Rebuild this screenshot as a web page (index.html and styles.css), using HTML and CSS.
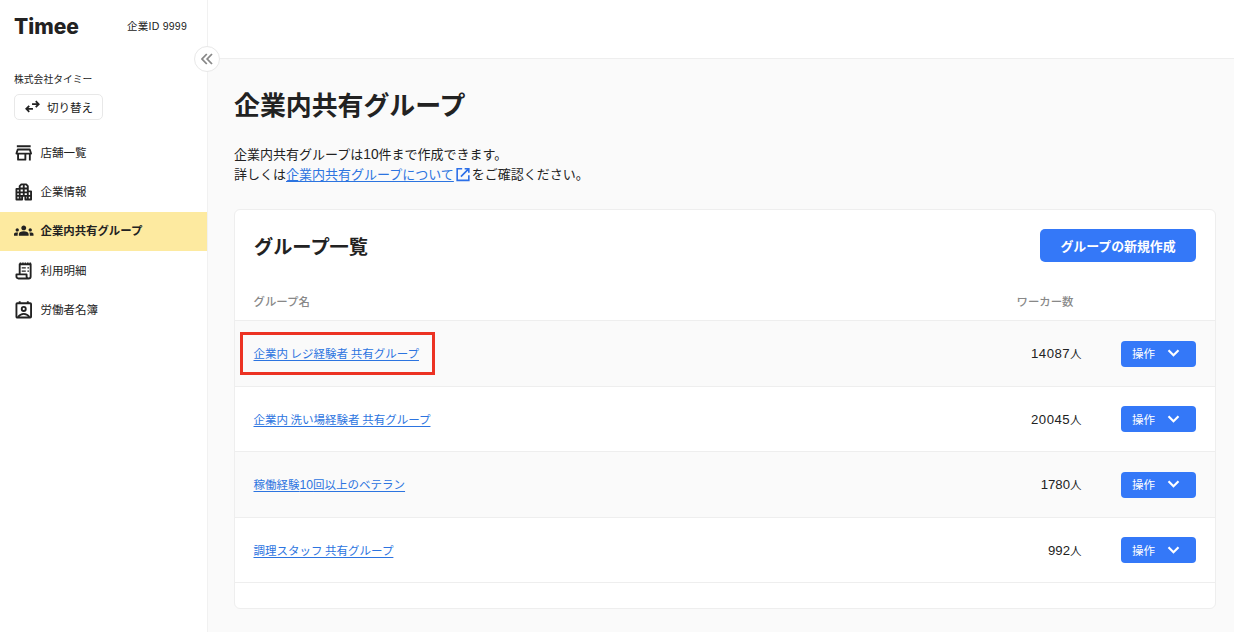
FILE: index.html
```html
<!DOCTYPE html>
<html lang="ja">
<head>
    <meta charset="UTF-8">
    <title>企業内共有グループ</title>
    <link rel="stylesheet" href="styles.css">
</head>
<body>
    <div class="sidebar">
        <div class="brand">
            <div class="logo">Timee</div>
            <div class="company-id">企業ID 9999</div>
        </div>
        <div class="company-name">株式会社タイミー</div>
        <button class="switch">
            <svg class="switch-icon" viewBox="0 0 16 14" fill="none" stroke="#222" stroke-width="1.9">
                <path d="M7.5 4.5h7M11.5 1.3l3.2 3.2-3.2 3.2M8.5 9.5h-7M4.5 6.3L1.3 9.5l3.2 3.2"/>
            </svg>
            <span>切り替え</span>
        </button>

        <div class="menu">
            <a class="menu-item">
                <svg class="icon line" viewBox="0 0 24 24"><path d="M3.5 4h17M3 13l1.600-5h14.800L21 13zM5 13v7.500h9V13M19.500 13v8.500"/></svg>
                <span>店舗一覧</span>
            </a>
            <a class="menu-item">
                <svg class="icon line" viewBox="0 0 24 24"><path d="M10 21.500H3V8.500h4V5l2-2h6l2 2v6.500h4v10h-7V17h-4zM3 12.700h14M3 17h18M7 8.500v13M12 3v14M17 11.500v10M7 8h10"/></svg>
                <span>企業情報</span>
            </a>
            <a class="menu-item active">
                <svg class="icon" viewBox="0 0 24 24"><path d="M12 12.750c1.630 0 3.070.390 4.240.900 1.080.480 1.760 1.560 1.760 2.730V18H6v-1.610c0-1.180.680-2.260 1.760-2.730 1.170-.520 2.610-.910 4.240-.910zM4 13c1.100 0 2-.900 2-2s-.900-2-2-2-2 .900-2 2 .900 2 2 2zm1.130 1.100c-.370-.060-.740-.100-1.130-.100-.990 0-1.930.210-2.780.580C.480 14.900 0 15.620 0 16.430V18h4.500v-1.610c0-.830.230-1.610.630-2.290zM20 13c1.100 0 2-.900 2-2s-.900-2-2-2-2 .900-2 2 .900 2 2 2zm4 3.430c0-.810-.480-1.530-1.220-1.850-.850-.370-1.790-.580-2.780-.580-.390 0-.760.040-1.130.100.400.680.630 1.460.630 2.290V18H24zM12 5.500c1.660 0 3 1.340 3 3s-1.340 3-3 3-3-1.340-3-3 1.340-3 3-3z"/></svg>
                <span>企業内共有グループ</span>
            </a>
            <a class="menu-item">
                <svg class="icon line" viewBox="0 0 24 24"><path d="M7 16V4h13.500v15c0 1.500-1 2.500-2.500 2.500H5.500c-1.500 0-2.500-1-2.500-2.500v-2.500h12.500V19c0 1.500 1 2.500 2.500 2.500"/><path class="dashes" d="M7 3h14"/><path class="thin" d="M9.500 8.500h5M16.500 8.500h2M9.500 12.500h5M16.500 12.500h2"/></svg>
                <span>利用明細</span>
            </a>
            <a class="menu-item">
                <svg class="icon line" viewBox="0 0 24 24"><rect x="3" y="4" width="18" height="17.500" rx="1"/><path d="M7 1.500V4M17 1.500V4M5 21c2-3 4.500-4 7-4s5 1 7 4"/><circle cx="12" cy="11" r="2.500"/></svg>
                <span>労働者名簿</span>
            </a>
        </div>

        <button class="collapse">
            <svg class="collapse-icon" viewBox="0 0 12 12" fill="none" stroke="#888" stroke-width="1.8"><path d="M5.800 1L1 6l4.800 5M11 1L6.200 6l4.800 5"/></svg>
        </button>
    </div>

    <div class="main">
        <div class="topbar"></div>
        <div class="content">
            <h1>企業内共有グループ</h1>
            <p class="description">
                企業内共有グループは<span class="digits">10</span>件まで作成できます。<br>
                詳しくは<a class="help-link">企業内共有グループについて</a><svg class="external" viewBox="0 0 18 18" fill="none" stroke="#2c6fe8" stroke-width="1.9"><path d="M8 2H2v14h14v-6M11 2h5v5M16 2L6.500 11.500"/></svg>をご確認ください。
            </p>

            <div class="card">
                <div class="card-header">
                    <h2>グループ一覧</h2>
                    <button class="create">グループの新規作成</button>
                </div>
                <div class="row head">
                    <div>グループ名</div>
                    <div>ワーカー数</div>
                </div>
                <div class="row">
                    <a class="group-link marked">企業内 レジ経験者 共有グループ</a>
                    <div class="count strong">14087<span class="unit">人</span></div>
                    <button class="action">操作<svg class="chevron" viewBox="0 0 12 8"><path d="M1 1.300l5 4.900 5-4.900"/></svg></button>
                </div>
                <div class="row">
                    <a class="group-link">企業内 洗い場経験者 共有グループ</a>
                    <div class="count strong">20045<span class="unit">人</span></div>
                    <button class="action">操作<svg class="chevron" viewBox="0 0 12 8"><path d="M1 1.300l5 4.900 5-4.900"/></svg></button>
                </div>
                <div class="row">
                    <a class="group-link">稼働経験<span class="digits">10</span>回以上のベテラン</a>
                    <div class="count">1780<span class="unit">人</span></div>
                    <button class="action">操作<svg class="chevron" viewBox="0 0 12 8"><path d="M1 1.300l5 4.900 5-4.900"/></svg></button>
                </div>
                <div class="row">
                    <a class="group-link">調理スタッフ 共有グループ</a>
                    <div class="count">992<span class="unit">人</span></div>
                    <button class="action">操作<svg class="chevron" viewBox="0 0 12 8"><path d="M1 1.300l5 4.900 5-4.900"/></svg></button>
                </div>
            </div>
        </div>
    </div>
</body>
</html>
```

FILE: styles.css
```css
* {
    box-sizing: border-box;
}
body {
    margin: 0;
    display: flex;
    height: 632px;
    overflow: hidden;
    background: #fafafa;
    color: #222;
    font-family: "Noto Sans CJK JP", sans-serif;
    font-size: 11.5px;
}
button {
    font-family: inherit;
    cursor: pointer;
}

.sidebar {
    position: relative;
    width: 208px;
    flex-shrink: 0;
    background: #fff;
    border-right: 1px solid #f1f1f1;
}
.brand {
    display: flex;
    align-items: center;
    justify-content: space-between;
    height: 52px;
    padding: 0 20px 0 14px;
}
.logo {
    font-family: Inter, sans-serif;
    font-size: 21px;
    font-weight: 800;
}
.company-id {
    padding-bottom: 1px;
    font-size: 10.5px;
    font-family: "Liberation Sans", "Noto Sans CJK JP", sans-serif;
    letter-spacing: 0.25px;
}
.company-name {
    margin: 19px 0 7px 14px;
    font-size: 9.8px;
    line-height: 16px;
}
.switch {
    display: flex;
    align-items: center;
    gap: 7px;
    width: 89px;
    height: 26px;
    margin-left: 14px;
    padding: 0 0 1px 10px;
    background: #fff;
    border: 1.5px solid #e8e8e8;
    border-radius: 5px;
    color: #222;
    font-size: 11.5px;
}
.switch-icon {
    width: 15px;
    height: 13px;
}

.menu {
    margin-top: 13px;
}
.menu-item {
    display: flex;
    align-items: center;
    gap: 7px;
    height: 39.3px;
    padding-left: 14px;
}
.menu-item span {
    padding-bottom: 2px;
}
.menu-item.active {
    background: #fdeaa0;
    font-weight: 700;
}
.menu-item.active span {
    font-size: 11.4px;
}
.icon {
    width: 19.5px;
    height: 19.5px;
    fill: #222;
}
.icon.line {
    fill: none;
    stroke: #222;
    stroke-width: 2.3;
    stroke-linejoin: round;
}
.icon .dashes {
    stroke-dasharray: 2 1;
}
.icon .thin {
    stroke-width: 1.7;
}

.collapse {
    position: absolute;
    top: 46px;
    right: -13px;
    display: flex;
    align-items: center;
    justify-content: center;
    width: 26px;
    height: 26px;
    padding: 0;
    background: #fff;
    border: 1px solid #e8e8e8;
    border-radius: 50%;
}
.collapse-icon {
    width: 12px;
    height: 12px;
}

.main {
    flex: 1;
}
.topbar {
    height: 59px;
    background: #fff;
    border-bottom: 1px solid #eee;
}
.content {
    padding: 25px 18px 0 26px;
}
h1 {
    margin: 0;
    font-size: 25.9px;
    line-height: 40px;
}
.description {
    height: 40px;
    margin: 20px 0 25px;
    font-size: 13px;
    line-height: 19px;
}
.digits {
    font-family: "Liberation Sans", sans-serif;
    font-size: 1.06em;
}
.help-link, .group-link {
    color: #2c74e0;
    text-decoration: underline;
    text-decoration-thickness: 1px;
    text-underline-offset: 1.5px;
}
.external {
    width: 18px;
    height: 15px;
    vertical-align: -3px;
}

.card {
    height: 400px;
    background: #fff;
    border: 1px solid #eee;
    border-radius: 6px;
}
.card-header {
    display: flex;
    align-items: center;
    justify-content: space-between;
    height: 71px;
    padding: 0 19px;
}
h2 {
    margin: 0;
    font-size: 19.2px;
}
.create {
    width: 156px;
    height: 33px;
    padding: 0 0 1px;
    background: #3478f8;
    border: none;
    border-radius: 5px;
    color: #fff;
    font-size: 12.9px;
    font-weight: 700;
}

.row {
    display: grid;
    grid-template-columns: 763px 65px 1fr;
    align-items: center;
    height: 65.5px;
    padding: 0 19px 0 18.5px;
    border-bottom: 1px solid #eee;
}
.row:nth-child(odd) {
    background: #fafafa;
}
.row.head {
    height: 40px;
    background: #fff;
    color: #888;
    font-size: 11.4px;
    font-weight: 500;
}
.group-link {
    justify-self: start;
}
/* red frame around the group being pointed out */
.marked {
    position: relative;
}
.marked::after {
    content: "";
    position: absolute;
    inset: -13px -16px -14px -13.5px;
    border: 3px solid #ec3223;
}
.count {
    font-family: "Liberation Sans", sans-serif;
    font-size: 13.2px;
    text-align: right;
}
.count.strong {
    letter-spacing: 0.45px;
}
.unit {
    font-family: "Noto Sans CJK JP", sans-serif;
    font-size: 11.5px;
    letter-spacing: 0;
}
.action {
    display: flex;
    align-items: center;
    justify-self: end;
    gap: 12px;
    width: 75px;
    height: 26px;
    margin-top: 1px;
    padding: 0 0 1px 11px;
    background: #3478f8;
    border: none;
    border-radius: 4px;
    color: #fff;
    font-size: 11.5px;
}
.chevron {
    width: 13px;
    height: 8px;
    fill: none;
    stroke: #fff;
    stroke-width: 2.2;
}
```
